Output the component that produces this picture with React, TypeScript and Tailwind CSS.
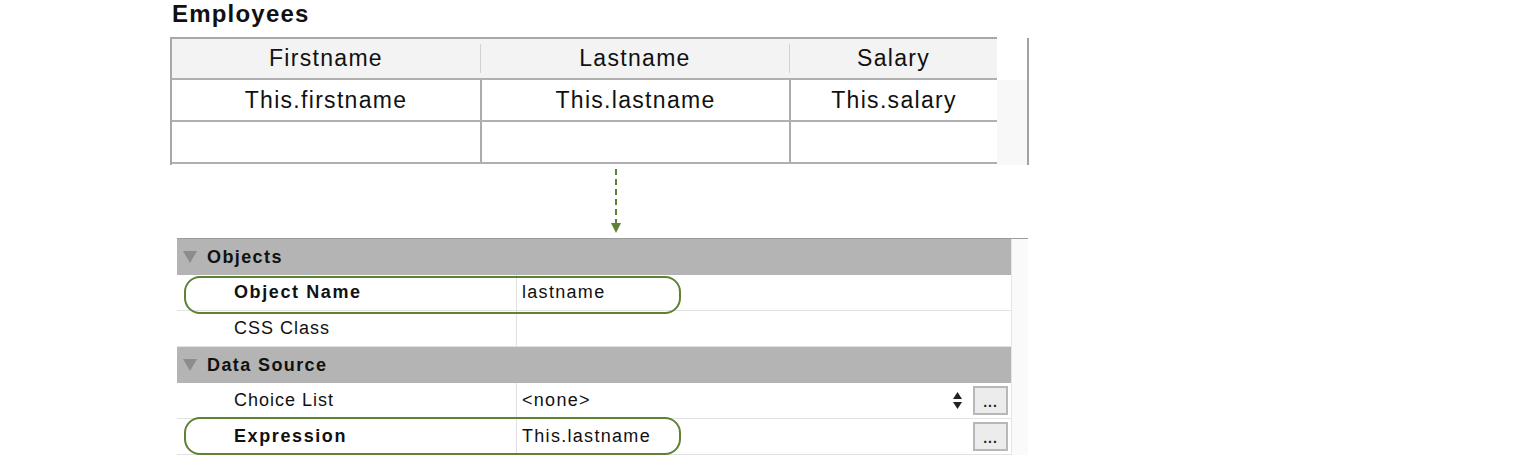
import React from 'react';

const green = '#5d8233';

function Triangle() {
    return (
        <svg width="14" height="12" viewBox="0 0 14 12" className="shrink-0">
            <path d="M0 0 H14 L7 12 Z" fill="#8c8c8c" />
        </svg>
    );
}

function DotsButton() {
    return (
        <div className="w-[35px] h-[29px] bg-[#ececec] border-2 border-[#b8b8b8] flex items-end justify-center pb-[4px]">
            <span className="text-[14px] font-bold leading-none tracking-[1px] text-[#222]">...</span>
        </div>
    );
}

function SectionHeader({ title }: { title: string }) {
    return (
        <div className="h-[36px] flex items-center pl-[6px] gap-[10px] bg-[#b4b4b4]">
            <Triangle />
            <span className="text-[18px] font-bold tracking-[1.4px] text-[#111]">{title}</span>
        </div>
    );
}

function PropRow({
    label,
    value,
    bold,
    highlight,
    pillTop,
    children,
}: {
    label: string;
    value?: string;
    bold?: boolean;
    highlight?: boolean;
    pillTop?: string;
    children?: React.ReactNode;
}) {
    return (
        <div className="relative h-[36px] flex border-b border-[#e2e2e2] bg-white">
            <div
                className={
                    'w-[340px] pl-[57px] flex items-center border-r border-[#e0e0e0] text-[18px] text-[#111] ' +
                    (bold ? 'font-bold tracking-[1.6px]' : 'tracking-[1px]')
                }
            >
                {label}
            </div>
            <div className="flex-1 flex items-center pl-[5px] pr-[3px] text-[18px] tracking-[1.3px] text-[#111]">
                <span>{value}</span>
                {children}
            </div>
            {highlight && (
                <div
                    className={
                        'absolute z-10 left-[7px] w-[497px] h-[38px] rounded-[16px] border-[2.5px] pointer-events-none ' +
                        (pillTop ?? 'top-[1px]')
                    }
                    style={{ borderColor: green }}
                />
            )}
        </div>
    );
}

export default function App() {
    const headers = ['Firstname', 'Lastname', 'Salary'];
    const values = ['This.firstname', 'This.lastname', 'This.salary'];

    return (
        <div
            className="w-[1536px] h-[456px] bg-white overflow-hidden text-[#111]"
            style={{ fontFamily: '"Liberation Sans", Arial, sans-serif' }}
        >
            <div className="ml-[170px] w-[859px]">
                {/* Title */}
                <div className="h-[37px] pl-[2px] text-[24px] leading-[28px] font-bold tracking-[1.2px]">Employees</div>

                {/* Table preview */}
                <div className="flex h-[128px]">
                    <div className="w-[827px] border-l-2 border-t-2 border-[#a8a8a8]">
                        <div className="flex h-[41px] bg-[#f3f3f3] border-b-2 border-[#b0b0b0] text-[23px] tracking-[1.3px]">
                            <div className="w-[308px] flex items-center justify-center">{headers[0]}</div>
                            <div className="w-px my-[5px] bg-[#d2d2d2]" />
                            <div className="w-[308px] flex items-center justify-center">{headers[1]}</div>
                            <div className="w-px my-[5px] bg-[#d2d2d2]" />
                            <div className="flex-1 flex items-center justify-center">{headers[2]}</div>
                        </div>
                        {[values, ['', '', '']].map((row, i) => (
                            <div key={i} className="flex h-[42px] border-b-2 border-[#b0b0b0] text-[23px] tracking-[1.3px]">
                                <div className="w-[308px] flex items-center justify-center">{row[0]}</div>
                                <div className="w-[2px] bg-[#ababab]" />
                                <div className="w-[307px] flex items-center justify-center">{row[1]}</div>
                                <div className="w-[2px] bg-[#ababab]" />
                                <div className="flex-1 flex items-center justify-center">{row[2]}</div>
                            </div>
                        ))}
                    </div>
                    <div className="w-[30px] flex flex-col">
                        <div className="h-[43px]" />
                        <div className="flex-1 bg-[#f8f8f8]" />
                    </div>
                    <div className="w-[2px] mt-[1px] bg-[#a2a2a2]" />
                </div>

                {/* Dashed arrow */}
                <div className="h-[71px]">
                    <svg width="12" height="70" viewBox="0 0 12 70" className="ml-[440px] mt-[2px]">
                        <line x1="6" y1="2" x2="6" y2="57" stroke={green} strokeWidth="2" strokeDasharray="6 4" />
                        <path d="M1 56 H11 L6 66 Z" fill={green} />
                    </svg>
                </div>

                {/* Property panel */}
                <div className="ml-[7px] w-[851px] border-t border-[#9c9c9c] flex">
                    <div className="w-[834px]">
                        <SectionHeader title="Objects" />
                        <PropRow label="Object Name" value="lastname" bold highlight />
                        <PropRow label="CSS Class" />
                        <SectionHeader title="Data Source" />
                        <PropRow label="Choice List" value="<none>">
                            <div className="flex-1" />
                            <svg width="9" height="17" viewBox="0 0 9 17" className="mr-[11px]">
                                <path d="M4.5 0 L9 7 H0 Z" fill="#222" />
                                <path d="M0 10 H9 L4.5 17 Z" fill="#222" />
                            </svg>
                            <DotsButton />
                        </PropRow>
                        <PropRow label="Expression" value="This.lastname" bold highlight pillTop="-top-[2px]">
                            <div className="flex-1" />
                            <DotsButton />
                        </PropRow>
                    </div>
                    <div className="w-[17px] bg-[#fafafa] border-l border-[#e6e6e6]" />
                </div>
            </div>
        </div>
    );
}
